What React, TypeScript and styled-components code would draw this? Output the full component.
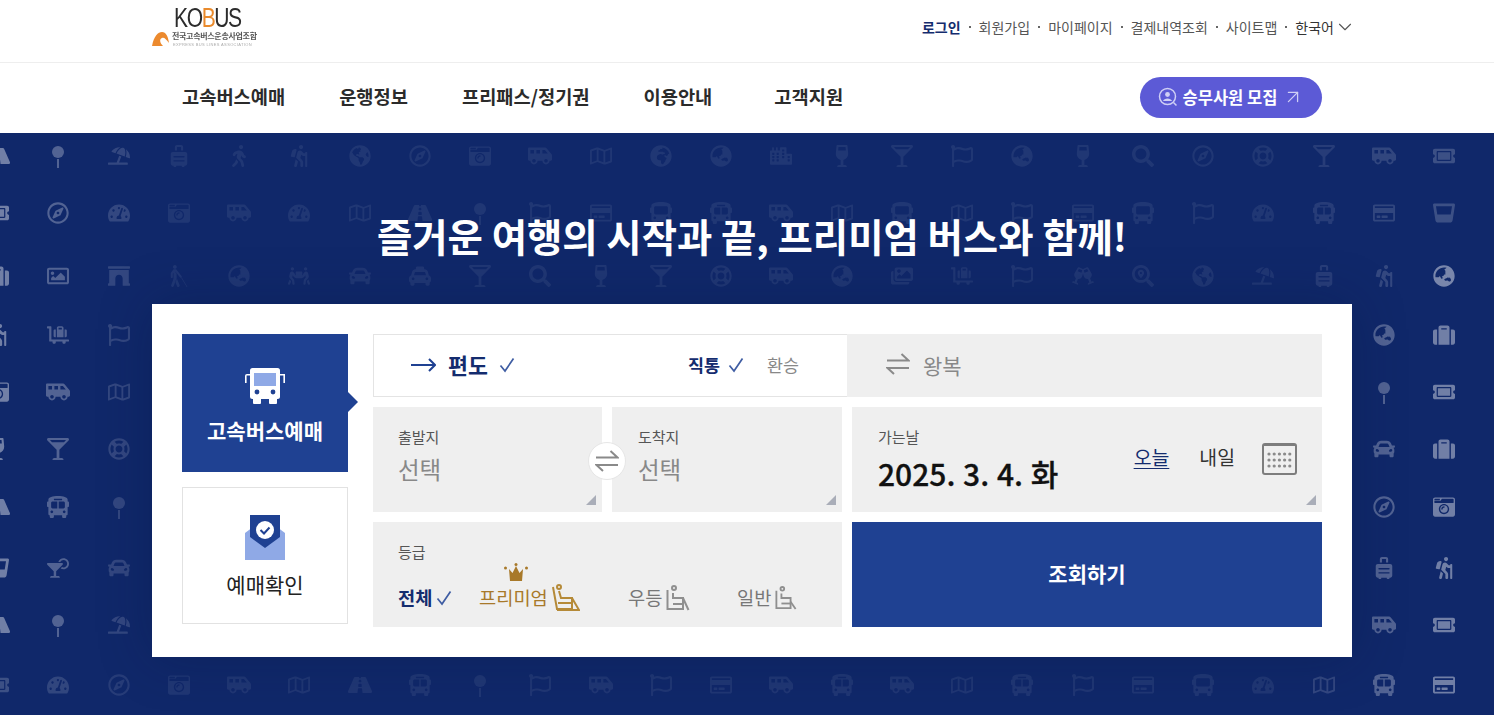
import { ComponentType } from "react";
import styled, { createGlobalStyle } from "styled-components";
import { ArrowUpRight, ChevronDown } from "lucide-react";
import {
  FaArchway, FaBlind, FaBus, FaBusAlt, FaCameraRetro, FaCar, FaCity, FaCocktail,
  FaGlassCheers, FaGlassMartiniAlt, FaGlassWhiskey, FaGlobeAfrica, FaGlobeAmericas,
  FaGlobeAsia, FaHiking, FaImages, FaLuggageCart, FaPeopleCarry, FaRegCompass,
  FaRegCreditCard, FaRegFlag, FaRegImage, FaRegLifeRing, FaRegMap, FaRoad, FaSearch,
  FaSearchLocation, FaShuttleVan, FaSuitcase, FaSuitcaseRolling, FaTachometerAlt,
  FaTaxi, FaTicketAlt, FaUmbrellaBeach, FaWalking, FaWineGlassAlt,
} from "react-icons/fa";

const NAVY = "#1f4192";
const DARK = "#10286a";
const PANEL = "#efefef";
const FONT = `"Noto Sans CJK KR", "Noto Sans", sans-serif`;

const GlobalStyle = createGlobalStyle`
  html, body {
    margin: 0;
    padding: 0;
    overflow: hidden;
    background: #fff;
    font-family: ${FONT};
  }
  * { box-sizing: border-box; }
`;

const TopBar = styled.div`
  height: 63px;
  border-bottom: 1px solid #eeeeee;
  padding: 0 138px 0 152px;
  display: flex;
  justify-content: space-between;
`;

const Logo = styled.div`
  position: relative;
  width: 110px;
  height: 62px;
  filter: blur(0.35px);
`;

const LogoName = styled.div`
  position: absolute;
  left: 22px;
  top: 6px;
  font: 400 27px/24px "Liberation Sans", sans-serif;
  letter-spacing: -1.8px;
  color: #2c2c2c;
  transform: scaleX(0.78);
  transform-origin: left center;
  span { color: #e98a2c; }
`;

const LogoKr = styled.div`
  position: absolute;
  left: 20px;
  top: 30px;
  font-size: 8px;
  line-height: 12px;
  font-weight: 700;
  letter-spacing: -0.3px;
  color: #555;
  white-space: nowrap;
`;

const LogoEn = styled.div`
  position: absolute;
  left: 21px;
  top: 42px;
  font: 400 4px/6px "Liberation Sans", sans-serif;
  letter-spacing: 0.35px;
  color: #aaa;
  white-space: nowrap;
`;

const LogoMark = styled.svg`
  position: absolute;
  left: 0;
  top: 31px;
`;

const TopLinks = styled.div`
  display: flex;
  align-items: center;
  height: 53px;
  font-size: 14px;
  color: #555;
`;

const TopLink = styled.a<{ $bold?: boolean; $dark?: boolean }>`
  font-weight: ${(p) => (p.$bold ? 700 : 400)};
  color: ${(p) => (p.$bold ? "#142c6e" : p.$dark ? "#333" : "#555")};
  white-space: nowrap;
`;

const Dot = styled.i`
  width: 2px;
  height: 2px;
  margin: 0 8px;
  background: #666;
`;

const NavBar = styled.div`
  height: 70px;
  padding: 0 172px 0 182px;
  display: flex;
  align-items: center;
  background: #fff;
`;

const NavItem = styled.a<{ $extra?: number }>`
  margin: 0 ${(p) => 54 + (p.$extra ?? 0)}px 6px 0;
  font-size: 18.7px;
  font-weight: 700;
  color: #2b2b2b;
  white-space: nowrap;
`;

const RecruitButton = styled.a`
  margin: 0 0 2px auto;
  width: 182px;
  height: 41px;
  border-radius: 21px;
  background: #5c5ad6;
  color: #fff;
  display: flex;
  align-items: center;
  justify-content: center;
  gap: 5px;
  font-size: 16.5px;
  font-weight: 700;
  white-space: nowrap;
  svg { flex: none; }
`;

const Hero = styled.section`
  position: relative;
  height: 582px;
  overflow: hidden;
  background: ${DARK};
  padding: 75px 0 0 152px;
`;

const Pattern = styled.div`
  position: absolute;
  left: -32px;
  top: 11px;
  width: 1600px;
  color: #fff;
`;

const PatternRow = styled.div<{ $h: number }>`
  display: flex;
  height: ${(p) => p.$h}px;
`;

const PatternCell = styled.div`
  width: 60.25px;
  height: 24px;
  flex: none;
  display: flex;
  justify-content: center;
  align-items: center;
`;

const Title = styled.h1`
  position: relative;
  width: 1200px;
  margin: 0 0 42px;
  font-size: 38.4px;
  line-height: 54px;
  font-weight: 700;
  color: #fff;
  text-align: center;
`;

const Card = styled.div`
  position: relative;
  width: 1200px;
  height: 353px;
  padding: 30px;
  background: #fff;
  box-shadow: 0 0 50px rgba(6, 20, 60, 0.28);
  display: flex;
  gap: 25px;
`;

const SideTabs = styled.div`
  width: 166px;
  flex: none;
  display: flex;
  flex-direction: column;
  gap: 15px;
`;

const SideTab = styled.div<{ $active?: boolean }>`
  position: relative;
  height: ${(p) => (p.$active ? 138 : 137)}px;
  background: ${(p) => (p.$active ? NAVY : "#fff")};
  border: ${(p) => (p.$active ? "0" : "1px solid #e2e2e2")};
  color: ${(p) => (p.$active ? "#fff" : "#222")};
  font-size: 21px;
  font-weight: ${(p) => (p.$active ? 700 : 400)};
  display: flex;
  flex-direction: column;
  align-items: center;
  padding-top: ${(p) => (p.$active ? 34 : 27)}px;
  gap: ${(p) => (p.$active ? 11 : 9)}px;
  line-height: 30px;
  ${(p) =>
    p.$active &&
    `&::after {
      content: "";
      position: absolute;
      left: 100%;
      top: 58px;
      border: 10px solid transparent;
      border-left-color: ${NAVY};
      border-right-width: 0;
    }`}
`;

const Form = styled.div`
  width: 949px;
  display: grid;
  grid-template-columns: 229px 230px 470px;
  grid-template-rows: 63px 105px 105px;
  gap: 10px;
`;

const TripRow = styled.div`
  grid-column: 1 / 4;
  display: flex;
`;

const OneWay = styled.div`
  width: 474px;
  border: 1px solid #e4e4e4;
  border-right: 0;
  padding: 0 40px 2px 37px;
  display: flex;
  align-items: center;
`;

const RoundTrip = styled.div`
  flex: 1;
  background: ${PANEL};
  padding: 0 0 2px 39px;
  display: flex;
  align-items: center;
  gap: 13px;
  color: #888;
  font-size: 21px;
`;

const OneWayLabel = styled.span`
  margin: 0 11px 0 12px;
  font-size: 21.7px;
  font-weight: 700;
  color: #142c6e;
`;

const RouteOption = styled.span<{ $on?: boolean }>`
  margin: 0 8px 0 0;
  font-size: 17.4px;
  font-weight: ${(p) => (p.$on ? 700 : 400)};
  color: ${(p) => (p.$on ? "#142c6e" : "#888")};
  white-space: nowrap;
`;

const RouteOptions = styled.div`
  margin-left: auto;
  display: flex;
  align-items: center;
  gap: 0;
  svg { margin-right: 23px; }
`;

const Panel = styled.div`
  position: relative;
  background: ${PANEL};
  padding: 19px 25px 0;
  & + & { padding-left: 26px; }
  &::after {
    content: "";
    position: absolute;
    right: 6px;
    bottom: 7px;
    width: 10px;
    height: 10px;
    background: #a9adb8;
    clip-path: polygon(100% 0, 100% 100%, 0 100%);
  }
`;

const FieldLabel = styled.div`
  font-size: 15px;
  line-height: 22px;
  color: #555;
`;

const FieldValue = styled.div`
  margin-top: 4px;
  font-size: 23.5px;
  line-height: 34px;
  color: #888;
`;

const SwapCircle = styled.div`
  position: absolute;
  left: -24px;
  top: 35px;
  z-index: 1;
  width: 38px;
  height: 38px;
  border-radius: 50%;
  background: #fff;
  border: 1px solid #e6e6e6;
  display: flex;
  align-items: center;
  justify-content: center;
`;

const DatePanel = styled(Panel)`
  padding-left: 26px;
  display: flex;
`;

const DateText = styled.div`
  flex: 1;
`;

const DateValue = styled.div`
  margin-top: 3px;
  font-size: 30px;
  line-height: 44px;
  font-weight: 500;
  word-spacing: 1px;
  color: #111;
  -webkit-text-stroke: 0.3px #111;
`;

const DayLink = styled.a<{ $today?: boolean }>`
  margin: 17px 30px 0 0;
  height: 30px;
  font-size: 19.4px;
  line-height: 27px;
  color: ${(p) => (p.$today ? "#142c6e" : "#333")};
  text-decoration: ${(p) => (p.$today ? "underline" : "none")};
  text-underline-offset: 3px;
  white-space: nowrap;
`;

const CalendarIcon = styled.svg`
  margin: 17px 0 0 -3px;
  flex: none;
`;

const GradePanel = styled.div`
  grid-column: 1 / 3;
  background: ${PANEL};
  padding: 19px 25px 0;
`;

const GradeList = styled.div`
  margin-top: 8px;
  display: flex;
  align-items: flex-end;
  height: 40px;
`;

const Grade = styled.div<{ $color: string; $bold?: boolean; $width: number }>`
  position: relative;
  width: ${(p) => p.$width}px;
  flex: none;
  display: flex;
  align-items: flex-end;
  gap: 4px;
  color: ${(p) => p.$color};
  font-size: 18.7px;
  line-height: 28px;
  font-weight: ${(p) => (p.$bold ? 700 : 400)};
  white-space: nowrap;
`;

const GradeCheck = styled.span`
  height: 27px;
`;

const Crown = styled.svg`
  position: absolute;
  left: 25px;
  top: -20px;
`;

const SearchButton = styled.button`
  border: 0;
  padding: 0 0 4px;
  background: ${NAVY};
  color: #fff;
  font-family: ${FONT};
  font-size: 21px;
  font-weight: 700;
`;

// pattern tiles, in the order they sit in the background, "_" is behind the card
const ICONS: Record<string, ComponentType<{ size?: number }>> = {
  road: FaRoad, umb: FaUmbrellaBeach, lug: FaSuitcaseRolling, walk: FaWalking,
  hike: FaHiking, gam: FaGlobeAmericas, gaf: FaGlobeAfrica, gas: FaGlobeAsia,
  comp: FaRegCompass, cam: FaCameraRetro, van: FaShuttleVan, map: FaRegMap,
  city: FaCity, wine: FaWineGlassAlt, mart: FaGlassMartiniAlt, flag: FaRegFlag,
  ring: FaRegLifeRing, tick: FaTicketAlt, gau: FaTachometerAlt, bus: FaBusAlt,
  bus2: FaBus, card: FaRegCreditCard, img: FaRegImage, tun: FaArchway,
  blind: FaBlind, port: FaPeopleCarry, car: FaCar, taxi: FaTaxi, find: FaSearch,
  imgs: FaImages, cart: FaLuggageCart, cheer: FaGlassCheers, fpin: FaSearchLocation,
  case: FaSuitcase, cock: FaCocktail, glass: FaGlassWhiskey,
};

const hidden = "_ _ _ _ _ _ _ _ _ _ _ _ _ _ _ _ _ _ _ _";

const ROWS: { h: number; tiles: string }[] = [
  { h: 57, tiles: "road pin umb lug walk hike gam comp cam van map gaf gas city wine mart flag gas wine find comp ring mart van tick" },
  { h: 63, tiles: "tick comp gau cam van gau map road pin flag card bus2 bus van map bus2 map flag card bus2 flag gau bus card glass" },
  { h: 59, tiles: "case img tun blind gas port car taxi mart find wine mart ring van gas imgs cart flag cheer fpin gam umb lug hike gas" },
  { h: 57, tiles: `hike cart flag ${hidden} gas case` },
  { h: 57, tiles: `cam van map ${hidden} pin tick` },
  { h: 58, tiles: `wine mart ring ${hidden} car case` },
  { h: 61, tiles: `road bus pin ${hidden} comp cam` },
  { h: 57, tiles: `glass cock car ${hidden} lug hike` },
  { h: 60, tiles: `road pin umb ${hidden} van tick` },
  { h: 40, tiles: "tick gau comp cam van map road bus pin flag van flag card van bus van map bus flag card bus2 gau map bus card" },
];

// the tiles are brighter towards the sides of the hero and fade under the card's glow
function tileOpacity(row: number, col: number) {
  const edge = Math.min(col, 24 - col);
  const side = Math.max(0, 0.34 - edge * 0.13);
  let weight = 1;
  if (row < 2 && col > 12) weight = 0.35;
  if (row === 2 && col > 12) weight = edge === 0 ? 1.1 : 0.4;
  if (row === 9 && col < 12) weight = 0.35;
  return 0.065 + side * weight;
}

function PinTile() {
  return (
    <svg width="24" height="24" viewBox="0 0 24 24" fill="currentColor">
      <circle cx="12" cy="8" r="6" />
      <rect x="11" y="15" width="2" height="9" />
    </svg>
  );
}

function Tile({ name }: { name: string }) {
  if (name === "_") return <PatternCell />;
  if (name === "pin") return <PatternCell><PinTile /></PatternCell>;
  const Icon = ICONS[name];
  return <PatternCell><Icon size={name === "van" || name === "road" ? 24 : 22} /></PatternCell>;
}

function Check({ size = 16, color = "#3f5da3" }: { size?: number; color?: string }) {
  return (
    <svg width={size} height={size} viewBox="0 0 16 16" fill="none" stroke={color} strokeWidth="1.7">
      <path d="M1.5 8.5 L6 14 L14.5 1.5" />
    </svg>
  );
}

function SwapArrows({ width = 24, color = "#8a8a8a" }: { width?: number; color?: string }) {
  return (
    <svg width={width} height={width * 0.92} viewBox="0 0 24 22" fill="none" stroke={color} strokeWidth="2">
      <path d="M1 7.5 H22.5 L15.5 1" />
      <path d="M23 15 H1.5 L8 21" />
    </svg>
  );
}

function BusIcon() {
  return (
    <svg width="42" height="36" viewBox="0 0 42 36">
      <path d="M1 15 V8 a2 2 0 0 1 2-2 H41 V15 h-1.6 V7.6 H2.6 V15 Z M41 6 V8" fill="#fff" />
      <rect x="6" y="0" width="30" height="31" rx="2.5" fill="#fff" />
      <rect x="10" y="5" width="22" height="13" fill="#8fa9e6" />
      <circle cx="13" cy="24" r="2.4" fill="#1f4192" />
      <circle cx="29" cy="24" r="2.4" fill="#1f4192" />
      <rect x="9" y="30" width="8" height="6" rx="1" fill="#fff" />
      <rect x="25" y="30" width="8" height="6" rx="1" fill="#fff" />
    </svg>
  );
}

function TicketMailIcon() {
  return (
    <svg width="40" height="45" viewBox="0 0 40 45">
      <path d="M0 18 L20 3 L40 18 V45 H0 Z" fill="#8fa9e6" />
      <path d="M5 0 H35 V22 L20 33 L5 22 Z" fill="#1f4192" />
      <circle cx="20" cy="15" r="9" fill="#fff" />
      <path d="M15.5 15 L19 18.5 L24.5 12.5" fill="none" stroke="#1f4192" strokeWidth="2" />
    </svg>
  );
}

function CalendarGlyph() {
  const dots = [];
  for (let y = 11; y <= 23; y += 6) {
    for (let x = 7; x <= 28; x += 5.2) dots.push(<circle key={`${x}-${y}`} cx={x} cy={y} r="1.6" fill="#8a8a8a" />);
  }
  return (
    <CalendarIcon width="35" height="32" viewBox="0 0 35 32">
      <rect x="1" y="1" width="33" height="30" rx="2" fill="none" stroke="#7d7d7d" strokeWidth="2" />
      <rect x="1" y="1" width="33" height="2" fill="#7d7d7d" />
      {dots}
    </CalendarIcon>
  );
}

function Seat({ width, color, recline = 0 }: { width: number; color: string; recline?: number }) {
  return (
    <svg width={width} height="26" viewBox="0 0 24 26" fill="none" stroke={color} strokeWidth="2">
      <circle cx="8" cy="3" r="2" />
      <path d="M1.5 5 V24 H17 V13 H7 V8" />
      <path d="M7 19 H17" />
      <path d={`M17 ${13 + recline} L22.5 25`} />
    </svg>
  );
}

function PremiumSeat() {
  return (
    <svg width="28" height="27" viewBox="0 0 28 27" fill="none" stroke="#b58a38" strokeWidth="2">
      <circle cx="7" cy="3" r="2" />
      <path d="M1 3 L5 25 H20 V14 H9 L7 7" />
      <path d="M6 19 H20 M20 14 L27 26 H5" />
    </svg>
  );
}

export default function App() {
  return (
    <>
      <GlobalStyle />
      <TopBar>
        <Logo>
          <LogoMark width="18" height="16" viewBox="0 0 18 16">
            <path d="M0 15 C2 5 6 1 10 1 C14 1 16 5 17 12 C14 8 12 6 10 7 C7 8 8 12 11 15 Z" fill="#ec8a2e" />
          </LogoMark>
          <LogoName>KO<span>B</span>US</LogoName>
          <LogoKr>전국고속버스운송사업조합</LogoKr>
          <LogoEn>EXPRESS BUS LINES ASSOCIATION</LogoEn>
        </Logo>
        <TopLinks>
          <TopLink $bold>로그인</TopLink>
          <Dot />
          <TopLink>회원가입</TopLink>
          <Dot />
          <TopLink>마이페이지</TopLink>
          <Dot />
          <TopLink>결제내역조회</TopLink>
          <Dot />
          <TopLink>사이트맵</TopLink>
          <Dot />
          <TopLink $dark>한국어</TopLink>
          <ChevronDown size={22} color="#555" strokeWidth={1.2} />
        </TopLinks>
      </TopBar>
      <NavBar>
        <NavItem>고속버스예매</NavItem>
        <NavItem>운행정보</NavItem>
        <NavItem>프리패스/정기권</NavItem>
        <NavItem $extra={8}>이용안내</NavItem>
        <NavItem>고객지원</NavItem>
        <RecruitButton>
          <svg width="20" height="20" viewBox="0 0 20 20" fill="none" stroke="#cfcff5" strokeWidth="1.5">
            <circle cx="9.5" cy="9.5" r="8" />
            <circle cx="9.5" cy="7.5" r="2.4" fill="#cfcff5" stroke="none" />
            <path d="M5 14 C6 10.5 13 10.5 14 14 Z" fill="#cfcff5" stroke="none" />
            <path d="M15.5 15.5 L18.5 18.5" />
          </svg>
          승무사원 모집
          <ArrowUpRight size={22} color="#cfcff5" strokeWidth={1.4} />
        </RecruitButton>
      </NavBar>
      <Hero>
        <Pattern>
          {ROWS.map((row, r) => (
            <PatternRow key={r} $h={row.h}>
              {row.tiles.split(" ").map((name, c) => (
                <div key={c} style={{ opacity: tileOpacity(r, c) }}>
                  <Tile name={name} />
                </div>
              ))}
            </PatternRow>
          ))}
        </Pattern>
        <Title>즐거운 여행의 시작과 끝, 프리미엄 버스와 함께!</Title>
        <Card>
          <SideTabs>
            <SideTab $active>
              <BusIcon />
              고속버스예매
            </SideTab>
            <SideTab>
              <TicketMailIcon />
              예매확인
            </SideTab>
          </SideTabs>
          <Form>
            <TripRow>
              <OneWay>
                <svg width="25" height="14" viewBox="0 0 25 14" fill="none" stroke={NAVY} strokeWidth="2">
                  <path d="M0 7 H24 M18 1 L24 7 L18 13" />
                </svg>
                <OneWayLabel>편도</OneWayLabel>
                <Check />
                <RouteOptions>
                  <RouteOption $on>직통</RouteOption>
                  <Check />
                  <RouteOption>환승</RouteOption>
                </RouteOptions>
              </OneWay>
              <RoundTrip>
                <SwapArrows />
                왕복
              </RoundTrip>
            </TripRow>
            <Panel>
              <FieldLabel>출발지</FieldLabel>
              <FieldValue>선택</FieldValue>
            </Panel>
            <Panel>
              <SwapCircle>
                <SwapArrows width={24} />
              </SwapCircle>
              <FieldLabel>도착지</FieldLabel>
              <FieldValue>선택</FieldValue>
            </Panel>
            <DatePanel>
              <DateText>
                <FieldLabel>가는날</FieldLabel>
                <DateValue>2025. 3. 4. 화</DateValue>
              </DateText>
              <DayLink $today>오늘</DayLink>
              <DayLink>내일</DayLink>
              <CalendarGlyph />
            </DatePanel>
            <GradePanel>
              <FieldLabel>등급</FieldLabel>
              <GradeList>
                <Grade $color="#142c6e" $bold $width={81}>
                  전체
                  <GradeCheck><Check /></GradeCheck>
                </Grade>
                <Grade $color="#a8792a" $width={149}>
                  <Crown width="24" height="18" viewBox="0 0 24 18">
                    <path d="M5 6 L8.5 10 L12 3 L15.5 10 L19 6 L18 18 H6 Z" fill="#a8792a" />
                    <circle cx="1.5" cy="5" r="1.5" fill="#a8792a" />
                    <circle cx="22.5" cy="5" r="1.5" fill="#a8792a" />
                    <circle cx="12" cy="1.5" r="1.5" fill="#a8792a" />
                  </Crown>
                  프리미엄
                  <PremiumSeat />
                </Grade>
                <Grade $color="#777" $width={109}>
                  우등
                  <Seat width={24} color="#8f8f8f" />
                </Grade>
                <Grade $color="#777" $width={80}>
                  일반
                  <Seat width={22} color="#8f8f8f" recline={4} />
                </Grade>
              </GradeList>
            </GradePanel>
            <SearchButton>조회하기</SearchButton>
          </Form>
        </Card>
      </Hero>
    </>
  );
}
